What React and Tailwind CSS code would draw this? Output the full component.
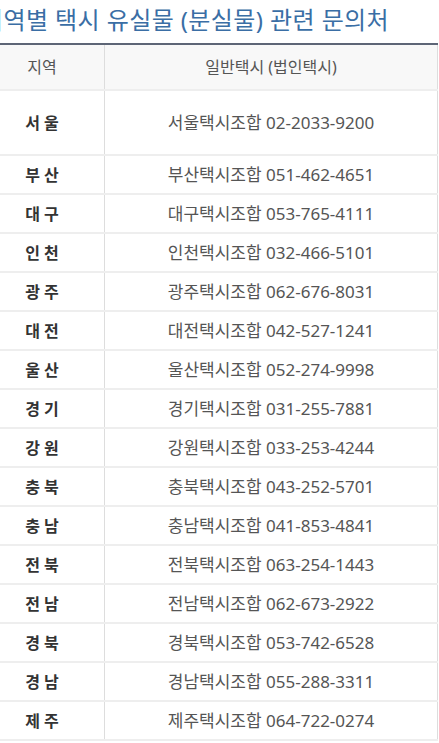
import React from 'react';

const rows = [
  { region: '서 울', name: '서울택시조합', tel: '02-2033-9200', tall: true },
  { region: '부 산', name: '부산택시조합', tel: '051-462-4651' },
  { region: '대 구', name: '대구택시조합', tel: '053-765-4111' },
  { region: '인 천', name: '인천택시조합', tel: '032-466-5101' },
  { region: '광 주', name: '광주택시조합', tel: '062-676-8031' },
  { region: '대 전', name: '대전택시조합', tel: '042-527-1241' },
  { region: '울 산', name: '울산택시조합', tel: '052-274-9998' },
  { region: '경 기', name: '경기택시조합', tel: '031-255-7881' },
  { region: '강 원', name: '강원택시조합', tel: '033-253-4244' },
  { region: '충 북', name: '충북택시조합', tel: '043-252-5701' },
  { region: '충 남', name: '충남택시조합', tel: '041-853-4841' },
  { region: '전 북', name: '전북택시조합', tel: '063-254-1443' },
  { region: '전 남', name: '전남택시조합', tel: '062-673-2922' },
  { region: '경 북', name: '경북택시조합', tel: '053-742-6528' },
  { region: '경 남', name: '경남택시조합', tel: '055-288-3311' },
  { region: '제 주', name: '제주택시조합', tel: '064-722-0274' },
];

const font = { fontFamily: '"Noto Sans", "Noto Sans CJK KR", sans-serif' };

const App = () => {
  return (
    <div className="w-[439px] h-[743px] overflow-hidden bg-white" style={font}>
      <div className="ml-[-20px] w-[459px]">
        <h2 className="h-[43px] ml-[1px] text-[24px] tracking-[0.4px] leading-[40px] font-normal text-[#3a6ea5] whitespace-nowrap">
          지역별 택시 유실물 (분실물) 관련 문의처
        </h2>
        <div className="w-[458px] border-t-2 border-[#5d6576]">
          <div className="flex h-[46px] bg-[#f8f8f8] border-b-2 border-[#eeeeee] text-[16px] text-[#555]">
            <div className="w-[125px] flex items-center justify-center border-r border-[#dddddd]">지역</div>
            <div className="flex-1 flex items-center justify-center border-r border-[#dddddd]">
              일반택시 (법인택시)
            </div>
          </div>
          {rows.map((r) => (
            <div
              key={r.region}
              className={`flex ${r.tall ? 'h-[65px]' : 'h-[39px]'} border-b-2 border-[#eeeeee]`}
            >
              <div className="w-[125px] flex items-center justify-center text-[16px] font-bold text-[#333] border-r border-[#dddddd]">
                {r.region}
              </div>
              <div className="flex-1 flex items-center justify-center text-[17px] text-[#555] border-r border-[#dddddd] whitespace-nowrap">
                {r.name} {r.tel}
              </div>
            </div>
          ))}
        </div>
      </div>
    </div>
  );
};

export default App;
